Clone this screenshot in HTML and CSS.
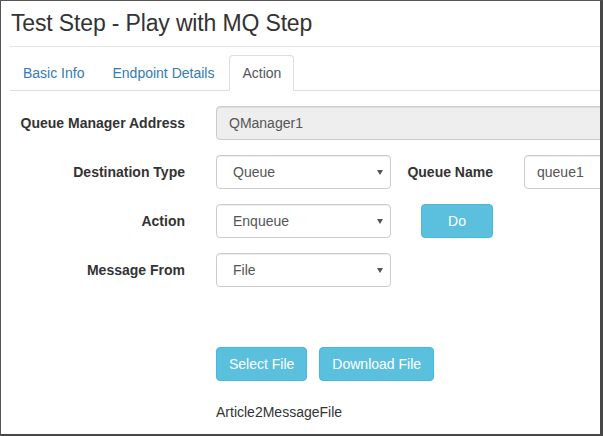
FILE: index.html
```html
<!DOCTYPE html>
<html>
<head>
<meta charset="utf-8">
<link rel="stylesheet" href="styles.css">
</head>
<body>
<div class="window">
  <div class="content">
    <div class="header">
      <h3 class="title">Test Step - Play with MQ Step</h3>
    </div>
    <ul class="tabs">
      <li><a class="tab">Basic Info</a></li>
      <li><a class="tab">Endpoint Details</a></li>
      <li><a class="tab active">Action</a></li>
    </ul>
    <div class="form">
      <div class="row">
        <label class="label">Queue Manager Address</label>
        <input class="input wide" value="QManager1" disabled>
      </div>
      <div class="row">
        <label class="label">Destination Type</label>
        <div class="select-wrap">
          <select class="select"><option>Queue</option></select>
          <span class="arrow"></span>
        </div>
        <label class="label2">Queue Name</label>
        <input class="input wide" value="queue1">
      </div>
      <div class="row">
        <label class="label">Action</label>
        <div class="select-wrap">
          <select class="select"><option>Enqueue</option></select>
          <span class="arrow"></span>
        </div>
        <div class="slot2"><button class="btn do">Do</button></div>
      </div>
      <div class="row">
        <label class="label">Message From</label>
        <div class="select-wrap">
          <select class="select"><option>File</option></select>
          <span class="arrow"></span>
        </div>
      </div>
      <div class="buttons">
        <button class="btn">Select File</button>
        <button class="btn">Download File</button>
      </div>
      <div class="filename">Article2MessageFile</div>
    </div>
  </div>
</div>
</body>
</html>
```
FILE: styles.css
```css
* { box-sizing: border-box; }
html, body { margin: 0; padding: 0; background: #fff; }
body {
  font-family: "Liberation Sans", Arial, Helvetica, sans-serif;
  font-size: 14px;
  line-height: 20px;
  color: #333;
}
.window {
  width: 603px;
  height: 436px;
  border-left: 1px solid #555;
  border-top: 1px solid #555;
  border-right: 3px solid #474747;
  border-bottom: 2px solid #474747;
  overflow: hidden;
  position: relative;
}
.content {
  padding-left: 9px;
  width: 800px;
}
.header {
  padding-top: 9px;
  padding-bottom: 10px;
  border-bottom: 1px solid #e5e5e5;
}
.title {
  margin: 0;
  font-size: 23px;
  line-height: 26px;
  font-weight: normal;
  color: #333;
  padding-left: 1px;
  letter-spacing: -0.15px;
}
.tabs {
  list-style: none;
  margin: 8px 0 0 0;
  padding: 0;
  display: flex;
  border-bottom: 1px solid #ddd;
}
.tabs li { margin-bottom: -1px; margin-right: 2px; }
.tab {
  display: block;
  padding: 7px 12px;
  border: 1px solid transparent;
  border-radius: 4px 4px 0 0;
  color: #337ab7;
  line-height: 20px;
}
.tab.active {
  color: #555;
  background: #fff;
  border-color: #ddd #ddd transparent #ddd;
}
.form { padding-top: 15px; }
.row {
  display: flex;
  align-items: center;
  height: 34px;
  margin-bottom: 15px;
}
.row > * { flex-shrink: 0; }
.label {
  width: 175px;
  text-align: right;
  font-weight: bold;
  margin-right: 31px;
  white-space: nowrap;
}
.label2 {
  width: 102px;
  text-align: right;
  font-weight: bold;
  margin-right: 31px;
  white-space: nowrap;
}
.slot2 {
  width: 102px;
  margin-right: 31px;
  display: flex;
  justify-content: flex-end;
}
.input {
  height: 34px;
  padding: 6px 12px;
  border: 1px solid #ccc;
  border-radius: 4px;
  font: inherit;
  color: #555;
  background: #fff;
  box-shadow: inset 0 1px 1px rgba(0,0,0,.075);
}
.input:disabled { background: #eee; color: #555; opacity: 1; }
.wide { width: 420px; }
.select-wrap {
  position: relative;
  width: 175px;
  height: 34px;
}
.select {
  -webkit-appearance: none;
  appearance: none;
  width: 175px;
  height: 34px;
  padding: 6px 16px;
  border: 1px solid #ccc;
  border-radius: 4px;
  font: inherit;
  color: #555;
  background: #fff;
  box-shadow: inset 0 1px 1px rgba(0,0,0,.075);
}
.arrow {
  position: absolute;
  right: 8px;
  top: 15px;
  width: 0;
  height: 0;
  border-left: 3px solid transparent;
  border-right: 3px solid transparent;
  border-top: 5px solid #555;
}
.btn {
  height: 34px;
  padding: 6px 12px;
  border: 1px solid #46b8da;
  border-radius: 4px;
  background: #5bc0de;
  color: #fff;
  font-family: inherit;
  font-size: 14px;
  font-weight: normal;
  line-height: 20px;
}
.do { width: 72px; }
.buttons {
  display: flex;
  gap: 12px;
  padding-left: 206px;
  margin-top: 60px;
}
.filename {
  padding-left: 206px;
  margin-top: 21px;
}
```
